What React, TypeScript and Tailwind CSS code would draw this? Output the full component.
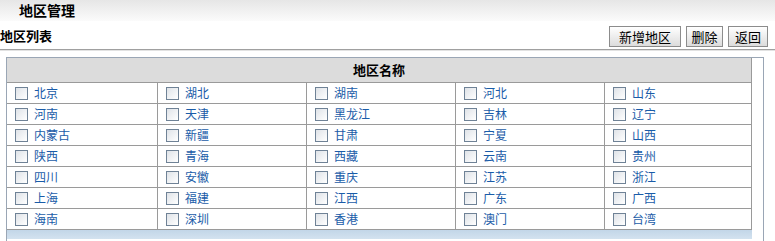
import React from "react";

const font = { fontFamily: '"Noto Sans CJK SC", "Noto Sans", sans-serif' };

const regions = [
  ["北京", "湖北", "湖南", "河北", "山东"],
  ["河南", "天津", "黑龙江", "吉林", "辽宁"],
  ["内蒙古", "新疆", "甘肃", "宁夏", "山西"],
  ["陕西", "青海", "西藏", "云南", "贵州"],
  ["四川", "安徽", "重庆", "江苏", "浙江"],
  ["上海", "福建", "江西", "广东", "广西"],
  ["海南", "深圳", "香港", "澳门", "台湾"],
];

const colWidths = ["w-[151px]", "w-[149px]", "w-[149px]", "w-[149px]", "w-[147px]"];

const Checkbox: React.FC = () => (
  <span className="inline-block w-[13px] h-[13px] border border-[#6f8296] bg-gradient-to-br from-[#dfe3e8] to-white shrink-0" />
);

const Btn: React.FC<{ label: string; w: string }> = ({ label, w }) => (
  <button
    className={`${w} h-[21px] border border-[#8c8c8c] bg-gradient-to-b from-white to-[#dcdcdc] text-[13px] leading-[19px] text-black`}
  >
    {label}
  </button>
);

const App: React.FC = () => {
  return (
    <div className="w-[775px] h-[241px] bg-white overflow-hidden" style={font}>
      <div className="h-[21px] bg-gradient-to-b from-[#e6e6e6] to-[#fbfbfb] pl-[19px] text-[14px] font-bold leading-[21px] text-black">
        地区管理
      </div>

      <div className="h-[28px] flex items-end justify-between pr-[7px] pb-[2px]">
        <span className="text-[13px] font-bold leading-[20px] text-black mb-[1px]">地区列表</span>
        <div className="flex gap-[5px]">
          <Btn label="新增地区" w="w-[72px]" />
          <Btn label="删除" w="w-[37px]" />
          <Btn label="返回" w="w-[40px]" />
        </div>
      </div>

      <div className="border-t border-[#a0a0a0] border-b border-b-[#e2e2e2] h-[2px]" />

      <div className="mt-[6px] ml-[6px] w-[758px] border border-[#9aa6b5] pr-[11px]">
        <div className="h-[25px] bg-[#dcdcdc] border-b border-[#9a9a9a] border-r border-r-[#9a9a9a] text-center text-[13px] font-bold leading-[24px] text-black">
          地区名称
        </div>
        {regions.map((row, i) => (
          <div key={i} className="flex h-[21px] border-b border-[#9a9a9a]">
            {row.map((name, j) => (
              <div
                key={name}
                className={`${colWidths[j]} border-r border-[#9a9a9a] flex items-center pl-[8px] gap-[6px]`}
              >
                <Checkbox />
                <span className="text-[12px] leading-[20px] text-[#1a5ca8]">{name}</span>
              </div>
            ))}
          </div>
        ))}
        <div className="h-[9px] bg-gradient-to-b from-[#c2d6e8] to-[#d3e2ef]" />
        <div className="h-[6px]" />
      </div>
    </div>
  );
};

export default App;
